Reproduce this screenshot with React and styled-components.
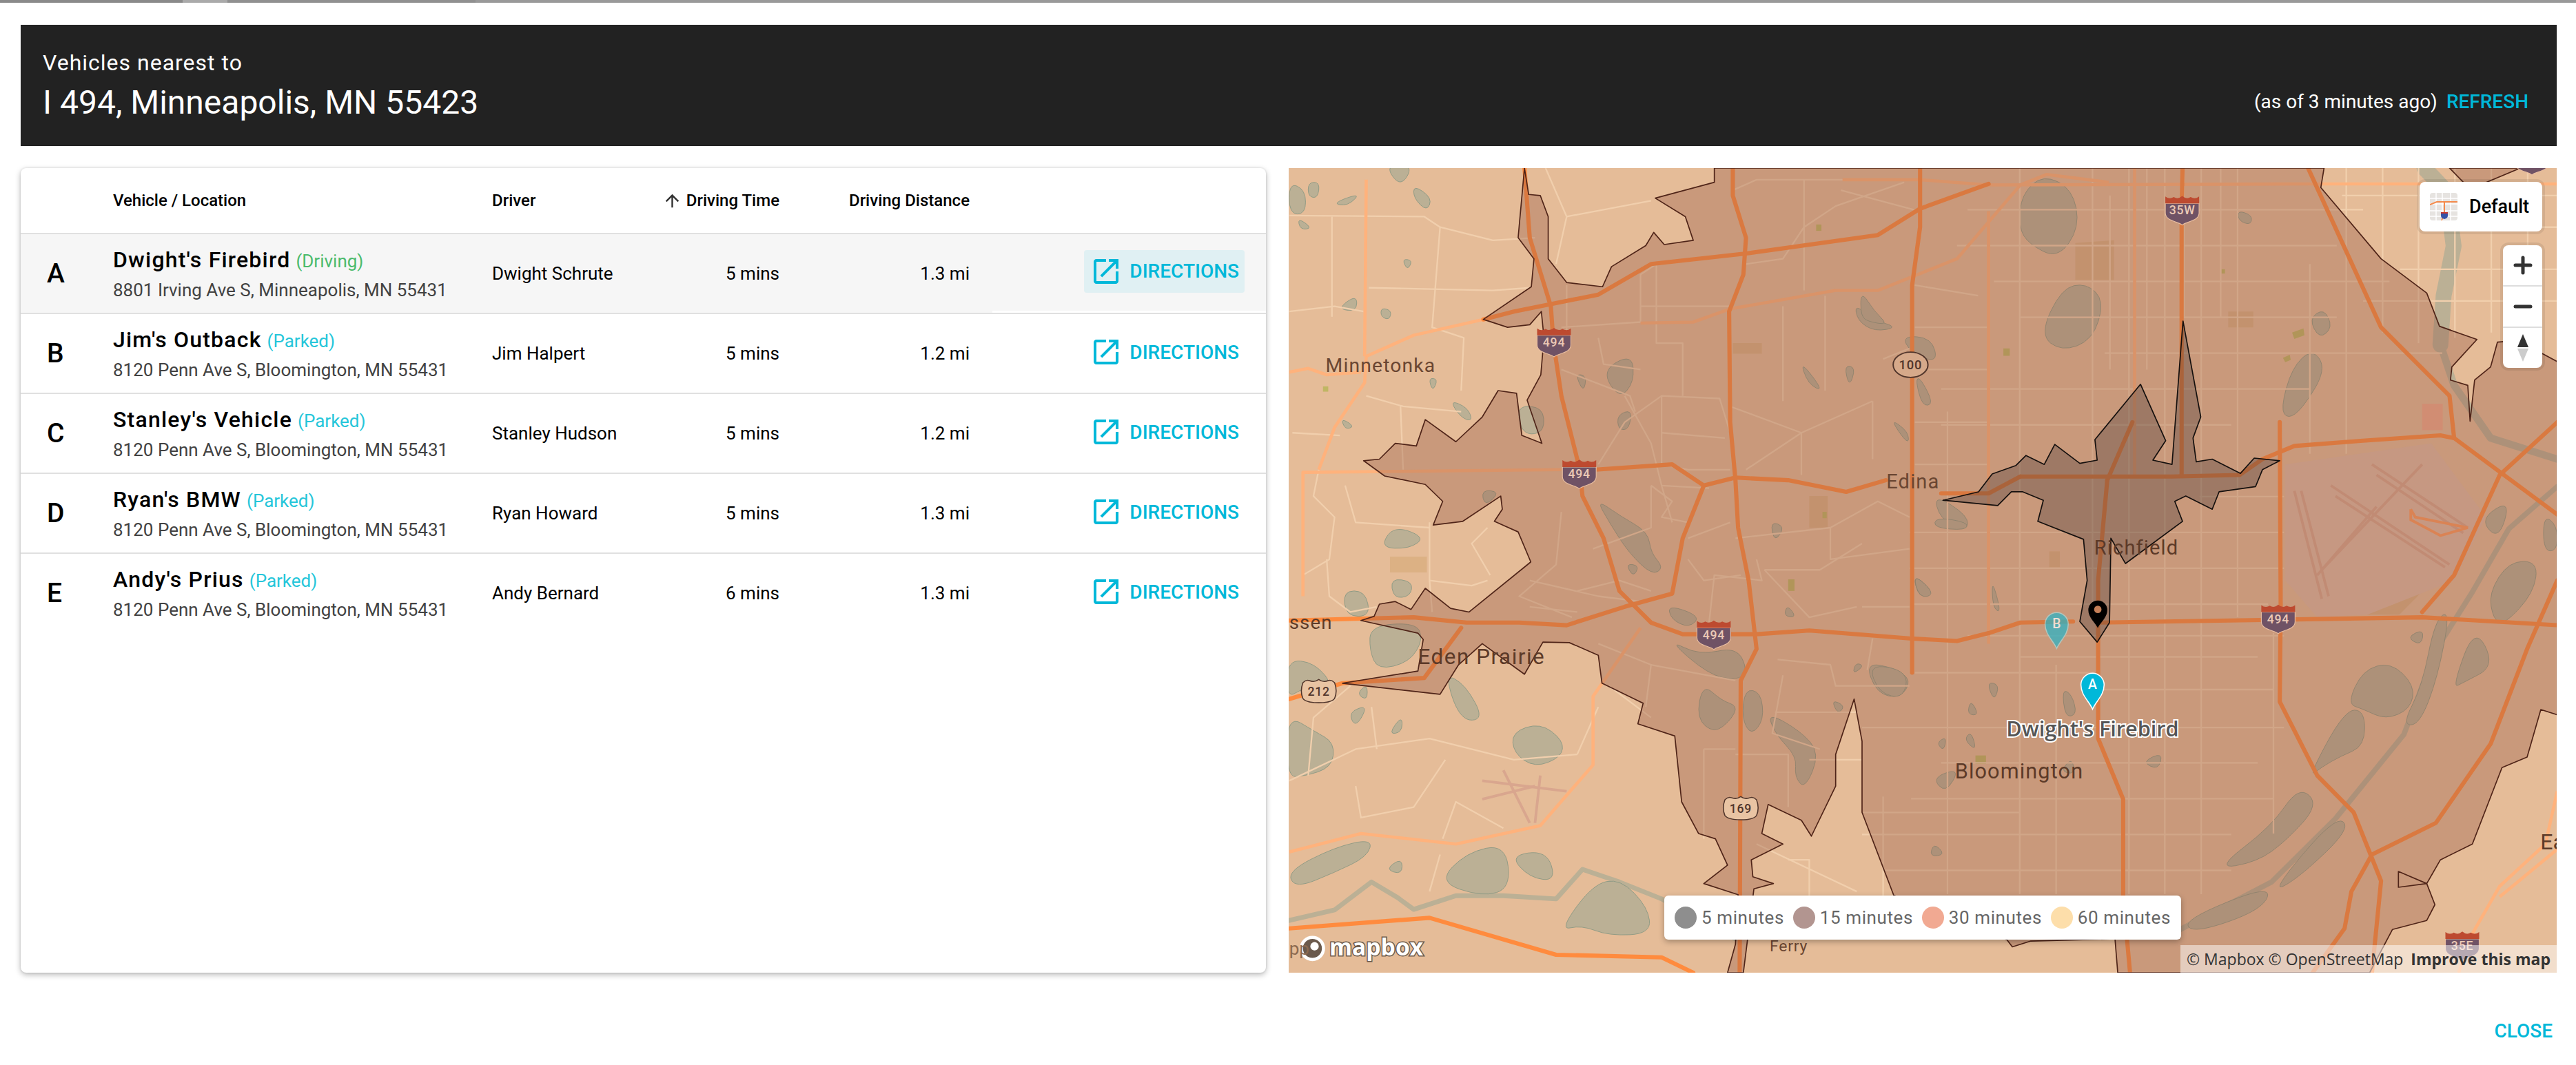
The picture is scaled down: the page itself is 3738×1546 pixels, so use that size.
import React from "react";
import styled, { createGlobalStyle } from "styled-components";

const CYAN = "#00b8d9";

const GlobalStyle = createGlobalStyle`
  html, body {
    margin: 0;
    background: #fff;
    font-family: Roboto, "Liberation Sans", sans-serif;
    color: #000;
  }
`;

const vehicles = [
  { letter: "A", name: "Dwight's Firebird", status: "Driving", address: "8801 Irving Ave S, Minneapolis, MN 55431", driver: "Dwight Schrute", time: "5 mins", distance: "1.3 mi", active: true },
  { letter: "B", name: "Jim's Outback", status: "Parked", address: "8120 Penn Ave S, Bloomington, MN 55431", driver: "Jim Halpert", time: "5 mins", distance: "1.2 mi" },
  { letter: "C", name: "Stanley's Vehicle", status: "Parked", address: "8120 Penn Ave S, Bloomington, MN 55431", driver: "Stanley Hudson", time: "5 mins", distance: "1.2 mi" },
  { letter: "D", name: "Ryan's BMW", status: "Parked", address: "8120 Penn Ave S, Bloomington, MN 55431", driver: "Ryan Howard", time: "5 mins", distance: "1.3 mi" },
  { letter: "E", name: "Andy's Prius", status: "Parked", address: "8120 Penn Ave S, Bloomington, MN 55431", driver: "Andy Bernard", time: "6 mins", distance: "1.3 mi" },
];

const legend = [
  { label: "5 minutes", color: "#8e8e8e" },
  { label: "15 minutes", color: "#b29590" },
  { label: "30 minutes", color: "#f1a992" },
  { label: "60 minutes", color: "#fddeaa" },
];

// map data is traced in two coordinate sets, east() brings the second into the first
const east = (pts) =>
  pts
    .trim()
    .split(/\s+/)
    .map((p) => {
      const [x, y] = p.split(",").map(Number);
      return `${(x * 0.8653 + 1097.6).toFixed(1)},${y}`;
    })
    .join(" ");

// rounds a traced outline into a blob
const blob = (pts) => {
  const p = pts.trim().split(/\s+/).map((s) => s.split(",").map(Number));
  const mid = (a, b) => `${((a[0] + b[0]) / 2).toFixed(1)} ${((a[1] + b[1]) / 2).toFixed(1)}`;
  let d = `M${mid(p[p.length - 1], p[0])}`;
  p.forEach((pt, i) => {
    d += ` Q${pt[0]} ${pt[1]} ${mid(pt, p[(i + 1) % p.length])}`;
  });
  return `${d} Z`;
};

const zone30 = [
  "820,18 820,45 708,75 765,110 780,155 725,163 705,140 690,165 625,205 608,243 540,235 505,190 505,110 490,70 468,68 460,18 448,150 478,190 473,243 382,305 428,320 470,315 492,290 497,340 491,410 465,458 493,540 455,525 445,445 410,440 380,490 330,537 272,495 255,545 215,540 185,570 155,573 195,602 272,618 305,650 287,695 343,688 415,640 418,665 403,688 448,708 472,765 355,860 320,853 272,815 245,855 215,840 185,845 175,868 150,876 258,900 268,912 258,972 115,995 300,1016 335,960 380,920 460,978 495,917 545,918 600,942 607,995 685,1033 675,1072 745,1095 758,1220 790,1280 822,1290 845,1340 800,1375 865,1396 860,1490 845,1544 875,1544 895,1385 932,1375 893,1362 890,1330 950,1300 910,1280 922,1225 985,1255 1004,1285 1050,1190 1050,1130 1085,1025 1100,1105 1100,1240 1160,1397 1375,1482 1385,1495 1420,1484",
  east("557,1480 563,1544 1115,1544 1165,1462 1240,1445 1258,1415 1240,1375 1178,1352 1178,1382 1240,1375 1270,1330 1340,1300 1405,1155 1460,1135 1490,1045 1526,1055 1526,385 1440,345 1395,348 1380,395 1345,420 1335,498 1330,430 1292,420 1295,395 1350,343 1268,318 1240,255 1140,190 1008,55 1015,18"),
].join(" ");

const zone30Top = east("1290,18 1335,58 1445,18");

const zone5 = east(
  "180,648 258,632 288,598 340,582 362,563 402,580 425,542 480,578 518,572 513,533 613,428 668,535 640,572 682,580 706,308 745,490 728,530 735,575 770,570 832,597 862,568 918,573 880,590 865,622 785,632 770,665 712,640 688,650 705,688 580,768 548,720 545,880 518,917 480,878 496,800 488,722 388,688 400,648 355,632 330,632 300,658"
);

const lakes = [
  "14,45 45,60 45,105 14,105",
  "50,45 72,45 68,75 50,72",
  "195,12 250,12 225,55",
  "250,50 285,75 275,100 250,75",
  "95,85 150,65 125,90",
  "30,112 58,132 35,135",
  "105,285 142,258 142,290",
  "188,283 208,288 204,306 188,300",
  "228,190 248,193 238,212",
  "278,416 296,418 286,442",
  "318,458 352,472 362,498 340,492",
  "447,468 495,472 498,515 472,525 452,512",
  "112,492 138,508 120,514",
  "378,628 414,632 385,660",
  "212,696 272,718 242,740 186,738",
  "206,796 248,802 244,830 212,834",
  "116,820 158,820 168,868 122,868",
  "168,886 254,880 268,912 242,955 182,970 166,932",
  "10,950 62,956 100,1002 40,1004 10,1024",
  "10,1055 62,1086 100,1108 95,1155 40,1172 10,1172",
  "308,976 348,998 384,1064 338,1066",
  "436,1088 490,1070 534,1104 530,1135 480,1155 440,1128",
  "126,1050 164,1036 140,1080",
  "228,1056 202,1092 228,1088",
  "162,996 142,1015 162,1028",
  "10,1352 100,1306 172,1290 162,1324 100,1354 26,1384",
  "296,1372 350,1316 424,1300 434,1384 380,1400",
  "432,1322 502,1312 520,1370 470,1364",
  "196,1348 228,1326 228,1358",
  "526,1464 590,1376 642,1366 694,1420 700,1470 620,1474 568,1454",
  "606,402 664,370 668,424 640,456",
  "636,486 664,476 658,514 638,514",
  "556,408 578,412 572,444",
  "596,646 642,678 694,708 700,748 724,776 702,790 658,748 622,692",
  "652,768 678,772 666,794",
  "732,846 794,868 772,890 738,874",
  "732,912 792,942 862,926 884,972 862,990 808,978",
  "798,996 834,1028 864,1038 852,1064 820,1090 786,1062",
  "878,1006 908,1012 914,1064 890,1094 872,1062",
  "920,1050 984,1086 1020,1128 992,1196 972,1172 976,1134 936,1092",
  "1106,956 1162,966 1194,990 1172,1024 1128,1014",
  "1086,276 1122,306 1168,320 1124,328 1092,308",
  "1176,336 1232,340 1244,388 1192,368",
  "982,382 1028,442 998,428",
  "1066,392 1088,396 1076,434",
  "1196,786 1238,824 1208,834",
  "1152,492 1188,518 1188,544",
  "926,688 954,698 934,728",
  "1236,636 1302,678 1298,708 1248,684",
  "1346,796 1364,862 1348,852",
  "1476,1162 1498,1136 1504,1168",
  "1236,1298 1258,1320 1228,1324",
  "1042,1026 1068,1038 1054,1054",
  "958,846 976,870 952,868",
  "1088,956 1104,962 1082,978",
  east("352,68 400,30 464,58 480,130 432,190 368,162 346,130"),
  east("392,334 440,246 494,236 534,270 508,344 440,366"),
  east("982,304 1015,284 1034,320 1005,342"),
  east("920,474 945,396 990,360 1020,400 968,474 936,494"),
  east("826,98 858,108 854,126 828,118"),
  east("776,1348 900,1266 960,1190 1004,1225 932,1294 868,1334"),
  east("980,1174 1060,1046 1104,1046 1104,1114 1050,1134 1010,1154"),
  east("1066,1034 1100,970 1162,955 1214,1000 1204,1044 1150,1064 1100,1044"),
  east("1296,1004 1345,886 1390,962 1320,994"),
  east("1376,824 1420,764 1484,764 1474,824 1410,884 1386,874"),
  east("1186,1074 1230,1000 1258,876 1292,856 1264,984 1224,1074"),
  east("896,1394 1040,1246 1074,1270 960,1364"),
  east("706,1444 900,1376 882,1424 730,1470"),
  east("1356,684 1424,646 1398,724"),
  east("1526,696 1496,676 1496,744 1526,744"),
  east("441,1006 462,1016 474,1054 448,1060"),
  east("616,1144 662,1126 652,1160"),
  east("226,1102 242,1086 254,1124"),
  east("166,1108 188,1096 182,1124"),
  east("276,992 304,998 292,1030"),
  east("156,1174 218,1156 186,1204"),
  east("241,1026 259,1056 233,1054"),
  east("16,958 104,972 94,1024 40,1014"),
  east("114,786 164,826 128,834"),
  east("1196,908 1234,892 1228,924"),
  east("0,250 30,290 60,315 20,310 0,300"),
  east("165,680 235,690 230,705 160,700"),
  east("120,420 130,415 160,465 135,470"),
];

const rivers = [
  { points: "14,1445 100,1425 170,1372 220,1402 250,1424 330,1398 420,1398 520,1404 570,1348 640,1372 720,1404 800,1450 860,1480", width: 9 },
  { points: east("700,1462 900,1372 1040,1252 1190,1092 1260,932 1340,822 1420,702 1526,622"), width: 10 },
  { points: east("1235,18 1284,63 1299,166 1277,260 1270,353"), width: 30 },
  { points: east("1270,353 1300,430 1380,530 1526,570"), width: 14 },
];

const parks = [
  east("470,160 555,155 555,230 470,230"),
  east("805,290 860,290 860,320 805,320"),
  east("1110,740 1190,740 1250,800 1220,830 1180,865 1110,865"),
  "1000,640 1035,640 1035,700 1000,700",
  "855,350 910,350 910,370 855,370",
  "205,755 275,755 275,785 205,785",
  "1455,745 1475,745 1475,775 1455,775",
];

const greenSpots = [
  "1013,125 1023,125 1023,137 1013,137",
  "1368,360 1380,360 1380,374 1368,374",
  "960,798 972,798 972,820 960,820",
  "1025,670 1033,670 1033,682 1025,682",
  "78,432 88,432 88,442 78,442",
  "1315,1132 1335,1132 1335,1148 1315,1148",
  east("790,210 798,210 798,218 790,218"),
  east("945,330 970,322 972,335 950,342"),
  east("925,378 940,372 942,382 930,386"),
];

const minorRoads = [
  "14,108 270,110 300,130 400,155 480,150",
  "95,110 95,300",
  "165,245 400,250 470,245",
  "14,290 100,280 155,290",
  "300,130 285,320 345,340 340,440",
  "20,520 110,525",
  "225,470 230,590",
  "70,590 60,640 100,680 90,760 40,790",
  "85,760 90,830 130,860 180,850",
  "280,690 280,800 360,810 390,800",
  "280,800 285,860",
  "390,700 360,730 395,790",
  "14,1180 140,1120 280,1100 440,1140 560,1130",
  "140,1190 150,1250 250,1230 310,1140",
  "305,1290 330,1220 420,1270",
  "500,18 540,110 520,200",
  "540,110 700,80",
  "160,450 230,470 340,480",
  "120,620 140,690 280,700",
  "50,1170 60,1060 130,1000",
  "170,1040 180,1120",
  "560,1130 600,1040",
  "960,1330 1000,1330 1000,1400",
  "280,1390 300,1320",
  "900,1300 1090,1390",
  "600,580 650,500 720,450 830,455 850,520",
  "720,450 720,580 770,590 850,590",
  "720,520 840,530",
  "530,320 680,310 680,220 710,200",
  "680,280 850,280",
  "710,200 710,350 760,350 760,450",
  "880,200 950,190 990,130 1050,90 1180,45",
  "855,60 900,40 1190,40",
  "990,40 990,250",
  "1060,60 1210,100",
  "950,280 950,460",
  "1030,260 1030,440",
  "850,470 985,520 1120,460",
  "985,520 985,600",
  "1120,460 1120,570",
  "985,520 880,590",
  "860,720 1040,700 1130,650 1190,680",
  "1040,700 1040,760 1190,740",
  "900,760 910,800 820,790 810,880",
  "915,780 1020,780 1100,730",
  "915,780 1000,870 1090,850",
  "650,450 700,540 720,620 740,690",
  "530,670 520,770 450,830 550,870",
  "560,820 640,800 700,820",
  "470,800 600,830 680,840",
  "470,850 560,860",
  "600,920 700,960 690,1040",
  "700,960 860,990",
  "800,1120 860,1120",
  "800,1120 800,1290",
  "940,950 1040,960 1050,1000 1190,1000",
  "935,1050 1090,1050",
  "950,980 930,1090 1020,1120",
  "1120,910 1110,970",
  "1100,850 1190,850",
  "1100,1240 1400,1240",
  "1140,1210 1140,1400",
  "720,620 810,625",
  "530,400 660,450 670,480",
  "540,240 540,330",
  "600,340 610,390 680,400",
  "700,620 740,650 720,680 770,690",
  "590,740 700,700 700,620",
  "770,720 850,690",
  "770,760 800,800 870,790",
  "620,1000 700,1060",
  "860,1130 960,1130 960,1230",
  "1000,1140 1100,1140",
  "1140,380 1190,360",
  "1200,240 1320,260",
  "1200,320 1340,320",
  "1200,400 1340,400",
  "1200,500 1340,500",
  "1200,580 1340,580",
];

// square mile grid of the east half: [x, from y, to y] and [y, from x, to x]
const gridColumns = [
  [1262, 480, 1395], [1399, 18, 1395], [1468, 960, 1395], [1537, 18, 850], [1606, 18, 1395],
  [1674, 18, 1395], [1743, 18, 1395], [1812, 18, 870], [1880, 900, 1280], [1949, 200, 560], [2018, 18, 560], [2087, 18, 330],
  [2155, 18, 350], [2224, 18, 340], [2293, 18, 330], [2362, 18, 340],
  [1640, 18, 400], [1570, 70, 400], [1710, 18, 300], [1780, 18, 300],
];

const gridRows = [
  [97, 1300, 2050], [165, 1280, 2000], [233, 1350, 2100], [301, 1400, 2000], [369, 1560, 2200], [437, 1250, 1950],
  [505, 1250, 1800], [641, 1740, 1900], [709, 1190, 1900], [777, 1190, 1900], [845, 1193, 1870], [905, 1300, 1900],
  [945, 1400, 1850], [975, 1200, 1540], [1007, 1540, 1880], [1079, 1100, 1900], [1146, 1250, 1850], [1214, 1193, 1880],
  [1282, 1100, 1800], [1350, 1140, 1800], [70, 2010, 2418], [130, 2170, 2418], [210, 2120, 2418], [270, 2050, 2418],
];

const highways = [
  "460,18 470,150 510,280 515,350 530,450 565,590 570,640 610,720 640,820 700,880 760,902 900,902 1000,895 1190,910 1280,915 1340,900 1400,880 1500,878",
  east("520,880 880,875 1230,870 1526,885"),
  "382,305 440,290 600,258 700,200 880,180 1130,145 1210,95 1340,48",
  "855,18 855,70 880,150 875,220 848,290 850,500 860,610 865,700 885,800 900,930 870,990 868,1544",
  "1210,18 1210,130 1195,240 1195,975",
  "14,876 250,870 350,880 450,880 540,885 650,850 740,825 760,720 800,620 860,605 960,610 1070,632 1145,610",
  "1250,635 1340,635 1400,603",
  east("350,603 680,603 830,600 880,570 950,545 1100,535 1270,525 1300,530 1526,675"),
  east("705,18 703,100 703,600"),
  east("540,610 595,500"),
  east("540,610 520,800 520,1100 575,1215 575,1400 590,1544"),
  east("980,18 1140,320 1290,450 1300,530"),
  east("918,500 920,850 918,1030 1000,1170 1080,1240 1140,1370 1120,1544"),
  east("1526,500 1400,600 1300,790 1230,860"),
  east("1526,800 1460,930 1380,1110 1260,1260 1120,1320 1075,1390 1060,1460 990,1544"),
  "14,1025 115,995 270,985 340,890",
  "595,590 740,580 800,620",
  "14,1460 280,1440 520,1510 720,1515 780,1544",
];

const lightHighways = [
  "382,305 250,335 160,375 157,425 100,510 70,590",
  "160,40 157,375",
  "14,405 50,398 85,410 150,405",
  "40,830 40,595 530,590",
  "14,1315 150,1280 330,1300 490,1265 590,1150 590,1020 680,890",
  "680,312 780,310 850,285 1050,250 1130,250 1280,190 1400,50 1450,30 1568,45",
  "1340,100 1340,920",
  east("-40,40 130,40 280,50 980,48 1526,48"),
  east("600,18 600,600"),
  east("280,100 280,900"),
  east("1526,1200 1500,1300 1400,1380 1340,1470 1310,1544"),
  east("1526,1310 1400,1400"),
];

const runways = [
  east("950,630 1010,835"),
  east("965,630 1025,830"),
  east("1030,620 1290,770"),
  east("1040,640 1280,775"),
  east("1120,580 1330,700"),
  east("1130,600 1320,710"),
  east("1010,780 1230,580"),
  east("1000,790 1130,660"),
];

const westRunways = ["380,1180 540,1200", "420,1160 470,1260", "380,1215 480,1190", "490,1170 480,1260"];

const ArrowUpIcon = () => (
  <svg width="29" height="29" viewBox="0 0 24 24" fill="#333">
    <path d="M4 12l1.41 1.41L11 7.83V20h2V7.83l5.58 5.59L20 12l-8-8-8 8z" />
  </svg>
);

const OpenInNewIcon = () => (
  <svg width="48" height="48" viewBox="0 0 24 24" fill={CYAN}>
    <path d="M19 19H5V5h7V3H5c-1.11 0-2 .9-2 2v14c0 1.1.89 2 2 2h14c1.1 0 2-.9 2-2v-7h-2v7zM14 3v2h3.59l-9.83 9.83 1.41 1.41L19 6.41V10h2V3h-7z" />
  </svg>
);

const Interstate = ({ x, y, label }) => (
  <g transform={`translate(${x} ${y})`}>
    <path d="M-32 -10 V8 C-32 24 -8 24 0 31 C8 24 32 24 32 8 V-10 Z" fill="#6f5265" stroke="#e8bda0" strokeWidth="1.5" />
    <path d="M-32 -10 V-23 Q-24 -17 -16 -22 Q-8 -17 0 -24 Q8 -17 16 -22 Q24 -17 32 -23 V-10 Z" fill="#bd4a30" />
    <MapText x={0} y={11} $size={23} $color="#ecc9b5" $anchor="middle" $weight={500} $spacing={1}>{label}</MapText>
  </g>
);

const CountyShield = ({ x, y, label }) => (
  <g transform={`translate(${x} ${y})`}>
    <path d="M-30 -16 Q-24 -22 -18 -20 Q-8 -16 0 -22 Q8 -16 18 -20 Q24 -22 30 -16 Q36 0 30 14 Q24 22 0 22 Q-24 22 -30 14 Q-36 0 -30 -16 Z" fill="#e9c4a3" stroke="#50352b" strokeWidth="2" />
    <MapText x={0} y={9} $size={23} $color="#50352b" $anchor="middle" $weight={500} $spacing={1}>{label}</MapText>
  </g>
);

const StateOval = ({ x, y, label }) => (
  <g transform={`translate(${x} ${y})`}>
    <ellipse rx="33" ry="24" fill="#d6a98a" stroke="#50352b" strokeWidth="2.5" />
    <MapText x={0} y={9} $size={24} $color="#50352b" $anchor="middle" $weight={500} $spacing={1}>{label}</MapText>
  </g>
);

const Pin = ({ x, y, r, label, fill, edge, opacity }) => (
  <g transform={`translate(${x} ${y})`} opacity={opacity}>
    <path
      d={`M0 ${r * 2.1} C${-r * 0.3} ${r * 1.4} ${-r} ${r * 0.9} ${-r} 0 A${r} ${r} 0 1 1 ${r} 0 C${r} ${r * 0.9} ${r * 0.3} ${r * 1.4} 0 ${r * 2.1} Z`}
      fill={fill}
      stroke={edge}
      strokeWidth="2"
    />
    <MapText x={0} y={r * 0.38} $size={r * 1.15} $color="#fff" $anchor="middle" $weight={500}>{label}</MapText>
  </g>
);

const MapDrawing = () => (
  <MapSvg viewBox="13 18 2404 1526">
    <rect x="13" y="18" width="2404" height="1526" fill="#e5bc98" />
    {parks.map((p) => <polygon key={p} points={p} fill="#dcb184" />)}
    {greenSpots.map((p) => <polygon key={p} points={p} fill="#c0b664" />)}
    <polygon points={east("1230,465 1275,465 1275,515 1230,515")} fill="#f2a98c" />
    <polygon points={east("930,580 1250,540 1370,680 1300,800 1110,865 1000,870 930,800")} fill="#e0bba3" />
    <g fill="none" stroke="#bbb095" strokeLinejoin="round" strokeLinecap="round">
      {rivers.map((r) => <polyline key={r.points} points={r.points} strokeWidth={r.width} />)}
    </g>
    {lakes.map((p) => <path key={p} d={blob(p)} fill="#bbb095" stroke="#7f9380" strokeWidth="1" />)}
    <g fill="none" stroke="#f1cfad" strokeWidth="3" strokeLinejoin="round">
      {minorRoads.map((p) => <polyline key={p} points={p} />)}
      {gridColumns.map(([x, a, b]) => <line key={`c${x}${a}`} x1={x} x2={x} y1={a} y2={b} />)}
      {gridRows.map(([y, a, b]) => <line key={`r${y}${a}`} y1={y} y2={y} x1={a} x2={b} />)}
    </g>
    <g fill="none" stroke="#d9a68e" strokeWidth="5">
      {runways.map((p) => <polyline key={p} points={p} />)}
      {westRunways.map((p) => <polyline key={p} points={p} />)}
    </g>
    <g fill="none" stroke="#ffb27c" strokeWidth="6" strokeLinejoin="round">
      {lightHighways.map((p) => <polyline key={p} points={p} />)}
    </g>
    <polyline points={east("1205,665 1215,680 1330,700 1270,715 1205,685 1205,665")} fill="none" stroke="#ff9a5c" strokeWidth="5" />
    <g fill="none" stroke="#ff8b3e" strokeWidth="8" strokeLinejoin="round" strokeLinecap="round">
      {highways.map((p) => <polyline key={p} points={p} />)}
    </g>

    <polygon points={zone30} fill="rgb(150,90,70)" fillOpacity=".35" stroke="#4f2418" strokeWidth="2.2" strokeLinejoin="round" />
    <polygon points={zone30Top} fill="rgb(150,90,70)" fillOpacity=".35" stroke="#4f2418" strokeWidth="2.2" />
    <polygon points={zone5} fill="rgb(60,50,50)" fillOpacity=".3" stroke="#15100e" strokeWidth="2.2" strokeLinejoin="round" />

    <Interstate x={516} y={345} label="494" />
    <Interstate x={564} y={595} label="494" />
    <Interstate x={819} y={900} label="494" />
    <Interstate x={1707} y={95} label="35W" />
    <Interstate x={1889} y={870} label="494" />
    <Interstate x={2238} y={1490} label="35E" />
    <Interstate x={2370} y={0} label="" />
    <CountyShield x={70} y={1010} label="212" />
    <CountyShield x={870} y={1232} label="169" />
    <StateOval x={1192} y={391} label="100" />

    <MapText x={83} y={405} $size={37} $color="#6a4632" $spacing={1.5}>Minnetonka</MapText>
    <MapText x={1146} y={625} $size={38} $color="#6a4632" $spacing={1.5}>Edina</MapText>
    <MapText x={258} y={959} $size={41} $color="#5c3a28" $spacing={2}>Eden Prairie</MapText>
    <MapText x={1276} y={1175} $size={40} $color="#5c3a28" $spacing={1.5}>Bloomington</MapText>
    <MapText x={1540} y={751} $size={38} $color="#5c3a28" $spacing={1.5}>Richfield</MapText>
    <MapText x={14} y={892} $size={36} $color="#5c3a28" $spacing={1.5}>ssen</MapText>
    <MapText x={925} y={1503} $size={30} $color="#6a4632" $spacing={1}>Ferry</MapText>
    <MapText x={2386} y={1310} $size={42} $color="#5c3a28">Ea</MapText>

    <Pin x={1469} y={883} r={22} label="B" fill="#26b5c9" edge="#a9d9d9" opacity={0.7} />
    <Pin x={1537} y={998} r={22} label="A" fill={CYAN} edge="#fff" />
    <g transform="translate(1547 856)">
      <path d="M0 34 C-5 24 -18 14 -18 0 A18 18 0 1 1 18 0 C18 14 5 24 0 34 Z" fill="#000" />
      <circle r="7" cy="-1" fill="#c47f58" />
    </g>
    <Halo x={1537} y={1096} $size={40} $anchor="middle">Dwight's Firebird</Halo>

    <circle cx="58" cy="1498" r="21" fill="#6b5a4c" stroke="#fff" strokeWidth="6" />
    <circle cx="62" cy="1494" r="8" fill="#fff" />
    <MapText x={14} y={1510} $size={34} $color="#8c6a50">pp</MapText>
    <LogoText x={90} y={1512}>mapbox</LogoText>
  </MapSvg>
);

const BasemapThumb = () => (
  <svg width="40" height="40" viewBox="0 0 40 40">
    <rect width="40" height="40" rx="4" fill="#e6e3e0" />
    <path d="M0 8H40M0 16H40M0 26H40M0 34H40M9 0V40M18 0V40M30 0V40" stroke="#fff" strokeWidth="1.5" />
    <path d="M0 17 L10 13 H40 M21 13 V28 M21 30 L17 40" stroke="#f58b4c" strokeWidth="2" fill="none" />
    <path d="M16 28 H26 V33 Q26 37 21 38 Q16 37 16 33 Z" fill="#3653a6" />
    <rect x="16" y="28" width="10" height="2" fill="#c8382e" />
  </svg>
);

const App = () => (
  <Page>
    <GlobalStyle />
    <TopStrip />
    <Dialog>
      <Banner>
        <div>
          <BannerLabel>Vehicles nearest to</BannerLabel>
          <BannerTitle>I 494, Minneapolis, MN 55423</BannerTitle>
        </div>
        <BannerAside>
          <span>(as of 3 minutes ago)</span>
          <RefreshLink>REFRESH</RefreshLink>
        </BannerAside>
      </Banner>
      <Content>
        <TableCard>
          <HeadRow>
            <span />
            <HeadCell>Vehicle / Location</HeadCell>
            <HeadCell>Driver</HeadCell>
            <HeadCell $right>
              <ArrowUpIcon />
              Driving Time
            </HeadCell>
            <HeadCell $right>Driving Distance</HeadCell>
            <span />
          </HeadRow>
          {vehicles.map((v) => (
            <Row key={v.letter} $active={v.active}>
              <Letter>{v.letter}</Letter>
              <VehicleCell>
                <div>
                  <VehicleName>{v.name}</VehicleName>
                  <Status $driving={v.status === "Driving"}>({v.status})</Status>
                </div>
                <Address>{v.address}</Address>
              </VehicleCell>
              <Cell>{v.driver}</Cell>
              <Cell $right>{v.time}</Cell>
              <Cell $right>{v.distance}</Cell>
              <ActionCell $active={v.active}>
                <DirectionsButton $active={v.active}>
                  <OpenInNewIcon />
                  DIRECTIONS
                </DirectionsButton>
              </ActionCell>
            </Row>
          ))}
        </TableCard>
        <MapPanel>
          <MapDrawing />
          <StyleButton>
            <BasemapThumb />
            Default
          </StyleButton>
          <ZoomControls>
            <ZoomCell>
              <svg width="28" height="28" viewBox="0 0 28 28"><path d="M14 3V25M3 14H25" stroke="#333" strokeWidth="5" strokeLinecap="round" /></svg>
            </ZoomCell>
            <ZoomCell>
              <svg width="28" height="28" viewBox="0 0 28 28"><path d="M3 14H25" stroke="#333" strokeWidth="5" strokeLinecap="round" /></svg>
            </ZoomCell>
            <ZoomCell>
              <svg width="20" height="40" viewBox="0 0 20 40"><path d="M10 0L18 19H2Z" fill="#333" /><path d="M10 40L18 21H2Z" fill="#ccc" /></svg>
            </ZoomCell>
          </ZoomControls>
          <Legend>
            {legend.map((item) => (
              <LegendItem key={item.label}>
                <LegendDot $color={item.color} />
                {item.label}
              </LegendItem>
            ))}
          </Legend>
          <Attribution>
            <span>© Mapbox © OpenStreetMap</span>
            <strong>Improve this map</strong>
          </Attribution>
        </MapPanel>
      </Content>
      <Footer>
        <CloseLink>CLOSE</CloseLink>
      </Footer>
    </Dialog>
  </Page>
);

export default App;

const Page = styled.div`
  width: 3738px;
  height: 1546px;
  overflow: hidden;
  background: #fff;
`;

const TopStrip = styled.div`
  height: 4px;
  background: linear-gradient(90deg, #8a8a8a 0 265px, #aaa 265px 330px, #909090 330px 690px, #999 690px);
`;

const Dialog = styled.div`
  padding: 32px 28px 0 30px;
`;

const Banner = styled.header`
  height: 176px;
  box-sizing: border-box;
  background: #222;
  color: #fff;
  padding: 34px 41px 0 32px;
  display: flex;
  justify-content: space-between;
`;

const BannerLabel = styled.div`
  font-size: 32px;
  font-weight: 400;
  line-height: 42px;
  letter-spacing: 1px;
`;

const BannerTitle = styled.div`
  font-size: 48px;
  font-weight: 400;
  line-height: 62px;
  margin-top: 6px;
`;

const BannerAside = styled.div`
  display: flex;
  align-items: center;
  gap: 13px;
  margin-top: 54px;
  height: 46px;
  font-size: 28px;
  font-weight: 400;
`;

const RefreshLink = styled.span`
  color: ${CYAN};
  font-weight: 500;
  font-size: 28px;
`;

const Content = styled.div`
  display: flex;
  gap: 33px;
  margin-top: 32px;
  height: 1168px;
`;

const TableCard = styled.section`
  width: 1807px;
  background: #fff;
  border-radius: 8px;
  box-shadow: 0 3px 8px rgba(0, 0, 0, 0.28), 0 0 3px rgba(0, 0, 0, 0.12);
`;

const columns = "134px 550px 200px 217px 276px 1fr";

const HeadRow = styled.div`
  display: grid;
  grid-template-columns: ${columns};
  align-items: center;
  height: 94px;
  border-bottom: 2px solid #e0e0e0;
`;

const HeadCell = styled.div`
  display: flex;
  align-items: center;
  justify-content: ${(p) => (p.$right ? "flex-end" : "flex-start")};
  gap: 6px;
  font-size: 24px;
  font-weight: 500;
`;

const Row = styled.div`
  display: grid;
  grid-template-columns: ${columns};
  align-items: stretch;
  height: 114px;
  border-bottom: 2px solid #e0e0e0;
  background: ${(p) => (p.$active ? "#f6f6f6" : "#fff")};
  &:last-child {
    border-bottom: 0;
  }
`;

const Letter = styled.div`
  padding-left: 38px;
  align-self: center;
  font-size: 39px;
  font-weight: 500;
`;

const VehicleCell = styled.div`
  align-self: center;
  margin-top: -1px;
`;

const VehicleName = styled.span`
  font-size: 32px;
  font-weight: 500;
  letter-spacing: 1.2px;
`;

const Status = styled.span`
  margin-left: 8px;
  font-size: 26px;
  color: ${(p) => (p.$driving ? "#4cbb6c" : "#26c6da")};
`;

const Address = styled.div`
  margin-top: 10px;
  font-size: 26px;
  color: #424242;
`;

const Cell = styled.div`
  align-self: center;
  font-size: 26px;
  text-align: ${(p) => (p.$right ? "right" : "left")};
`;

const ActionCell = styled.div`
  display: flex;
  justify-content: flex-end;
  align-items: center;
  margin-left: 33px;
  padding: 0 31px 4px 0;
  border-bottom: ${(p) => (p.$active ? "3px solid #fff" : "0")};
`;

const DirectionsButton = styled.div`
  display: flex;
  align-items: center;
  height: 62px;
  box-sizing: border-box;
  padding: 0 8px;
  gap: 10px;
  border-radius: 4px;
  background: ${(p) => (p.$active ? "#e0f0f3" : "transparent")};
  color: ${CYAN};
  font-size: 28px;
  font-weight: 500;
`;

const MapPanel = styled.section`
  position: relative;
  width: 1840px;
  overflow: hidden;
`;

const MapSvg = styled.svg`
  display: block;
  width: 100%;
  height: 100%;
`;

const MapText = styled.text`
  font-family: Roboto, sans-serif;
  font-size: ${(p) => p.$size}px;
  font-weight: ${(p) => p.$weight || 400};
  fill: ${(p) => p.$color};
  text-anchor: ${(p) => p.$anchor || "start"};
  letter-spacing: ${(p) => p.$spacing || 0}px;
`;

const Halo = styled.text`
  font-family: "Open Sans", sans-serif;
  font-size: ${(p) => p.$size}px;
  font-weight: 600;
  fill: #555;
  stroke: #fff;
  stroke-width: 5px;
  paint-order: stroke;
  text-anchor: ${(p) => p.$anchor};
`;

const LogoText = styled.text`
  font-family: "Open Sans", sans-serif;
  font-size: 44px;
  font-weight: 700;
  fill: #fff;
  stroke: #6b5a4c;
  stroke-width: 4px;
  paint-order: stroke;
`;

const StyleButton = styled.div`
  position: absolute;
  top: 20px;
  right: 21px;
  width: 178px;
  height: 72px;
  box-sizing: border-box;
  padding-left: 15px;
  display: flex;
  align-items: center;
  gap: 17px;
  background: #fff;
  border-radius: 8px;
  box-shadow: 0 0 0 4px rgba(0, 0, 0, 0.08);
  font-size: 27px;
  font-weight: 500;
`;

const ZoomControls = styled.div`
  position: absolute;
  top: 112px;
  right: 21px;
  width: 57px;
  background: #fff;
  border-radius: 8px;
  box-shadow: 0 0 0 4px rgba(0, 0, 0, 0.08);
`;

const ZoomCell = styled.div`
  height: 58px;
  display: flex;
  align-items: center;
  justify-content: center;
  & + & {
    border-top: 2px solid #ddd;
  }
`;

const Legend = styled.div`
  position: absolute;
  left: 545px;
  bottom: 48px;
  height: 64px;
  width: 750px;
  box-sizing: border-box;
  padding: 0 15px;
  display: flex;
  align-items: center;
  justify-content: space-between;
  background: #fff;
  border-radius: 6px;
  box-shadow: 0 3px 8px rgba(0, 0, 0, 0.3);
`;

const LegendItem = styled.div`
  display: flex;
  align-items: center;
  gap: 7px;
  font-size: 26px;
  color: #666;
  letter-spacing: 0.6px;
`;

const LegendDot = styled.span`
  width: 32px;
  height: 32px;
  border-radius: 50%;
  background: ${(p) => p.$color};
`;

const Attribution = styled.div`
  position: absolute;
  right: 0;
  bottom: 0;
  height: 40px;
  width: 546px;
  box-sizing: border-box;
  padding: 0 9px;
  display: flex;
  align-items: center;
  justify-content: space-between;
  white-space: nowrap;
  background: rgba(255, 255, 255, 0.5);
  font-family: "Open Sans", sans-serif;
  font-size: 23px;
  color: #333;
`;

const Footer = styled.footer`
  display: flex;
  justify-content: flex-end;
  padding: 68px 6px 0 0;
`;

const CloseLink = styled.span`
  color: ${CYAN};
  font-size: 28px;
  font-weight: 500;
`;
